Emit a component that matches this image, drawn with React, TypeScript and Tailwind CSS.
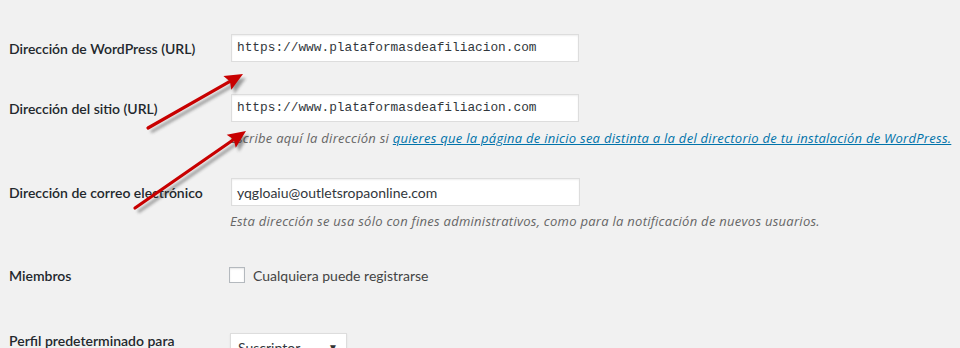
import React from "react";

const sans = { fontFamily: "Lato, 'Noto Sans', sans-serif" };
const ital = { fontFamily: "'Open Sans', 'Noto Sans', sans-serif" };

function Arrow({ x1, y1, x2, y2 }: { x1: number; y1: number; x2: number; y2: number }) {
  const dx = x2 - x1;
  const dy = y2 - y1;
  const len = Math.sqrt(dx * dx + dy * dy);
  const ux = dx / len;
  const uy = dy / len;
  const hl = 18;
  const hw = 8;
  const bx = x2 - ux * hl;
  const by = y2 - uy * hl;
  const px = -uy;
  const py = ux;
  const head = `${x2},${y2} ${bx + px * hw},${by + py * hw} ${bx + ux * 3},${by + uy * 3} ${bx - px * hw},${by - py * hw}`;
  return (
    <g>
      <g transform="translate(3,4)" opacity="0.45" filter="url(#blur)">
        <line x1={x1} y1={y1} x2={bx + ux * 4} y2={by + uy * 4} stroke="#333" strokeWidth="3" />
        <polygon points={head} fill="#333" />
      </g>
      <line x1={x1} y1={y1} x2={bx + ux * 4} y2={by + uy * 4} stroke="#c80000" strokeWidth="3.2" strokeLinecap="round" />
      <polygon points={head} fill="#c80000" />
    </g>
  );
}

export default function App() {
  return (
    <div className="relative w-[960px] h-[348px] overflow-hidden bg-[#f1f1f1] text-[#444]" style={sans}>
      <div className="pl-[9px]">
        <div className="h-0 relative">
          <p className="absolute left-[221px] top-[-17px] text-[13px] italic leading-[18px] tracking-[0.27px] text-[#666] whitespace-nowrap" style={ital}>
            En pocas palabras, explica de qué va este sitio.
          </p>
        </div>

        {/* Row 1 */}
        <div className="flex items-center pt-[34px]">
          <div className="w-[222px] text-[14px] font-semibold text-[#23282d] pt-[1px]">Dirección de WordPress (URL)</div>
          <div className="w-[348px] h-[28px] bg-white border border-[#ddd] shadow-[inset_0_1px_2px_rgba(0,0,0,0.07)] flex items-center px-[5px] text-[12.8px] text-[#32373c]" style={{ fontFamily: "'Liberation Mono', monospace" }}>
            https://www.plataformasdeafiliacion.com
          </div>
        </div>

        {/* Row 2 */}
        <div className="flex items-center mt-[32px]">
          <div className="w-[222px] text-[14px] font-semibold text-[#23282d] pt-[1px]">Dirección del sitio (URL)</div>
          <div className="w-[348px] h-[28px] bg-white border border-[#ddd] shadow-[inset_0_1px_2px_rgba(0,0,0,0.07)] flex items-center px-[5px] text-[12.8px] text-[#32373c]" style={{ fontFamily: "'Liberation Mono', monospace" }}>
            https://www.plataformasdeafiliacion.com
          </div>
        </div>
        <p className="ml-[221px] mt-[8px] text-[13px] italic leading-[17px] tracking-[0.27px] text-[#666] whitespace-nowrap" style={ital}>
          Escribe aquí la dirección si{" "}
          <span className="text-[#0073aa] underline">
            quieres que la página de inicio sea distinta a la del directorio de tu instalación de WordPress.
          </span>
        </p>

        {/* Row 3 */}
        <div className="flex items-center mt-[31px]">
          <div className="w-[222px] text-[14px] font-semibold text-[#23282d] pt-[1px]">Dirección de correo electrónico</div>
          <div className="w-[349px] h-[28px] bg-white border border-[#ddd] shadow-[inset_0_1px_2px_rgba(0,0,0,0.07)] flex items-center px-[5px] text-[14px] text-[#32373c]">
            yqgloaiu@outletsropaonline.com
          </div>
        </div>
        <p className="ml-[221px] mt-[6px] text-[13px] italic leading-[18px] tracking-[0.27px] text-[#666] whitespace-nowrap" style={ital}>
          Esta dirección se usa sólo con fines administrativos, como para la notificación de nuevos usuarios.
        </p>

        {/* Row 4 */}
        <div className="flex items-center mt-[37px] h-[16px]">
          <div className="w-[220px] text-[14px] font-semibold text-[#23282d]">Miembros</div>
          <div className="w-[16px] h-[16px] bg-white border border-[#b4b9be] shadow-[inset_0_1px_2px_rgba(0,0,0,0.1)]" />
          <span className="ml-[8px] text-[14px] text-[#444]">Cualquiera puede registrarse</span>
        </div>

        {/* Row 5 */}
        <div className="flex items-start mt-[50px]">
          <div className="w-[221px] text-[14px] font-semibold text-[#23282d] leading-[20px] -mt-[2px]">Perfil predeterminado para</div>
          <div className="w-[117px] h-[28px] bg-white border border-[#ddd] shadow-[0_1px_2px_rgba(0,0,0,0.07)] flex items-center justify-between pl-[7px] pr-[8px] text-[14px] text-[#32373c]">
            <span>Suscriptor</span>
            <span className="text-[10px] text-[#333]">▼</span>
          </div>
        </div>
      </div>

      <svg className="absolute inset-0 pointer-events-none" width="960" height="348">
        <defs>
          <filter id="blur" x="-20%" y="-20%" width="140%" height="140%">
            <feGaussianBlur stdDeviation="1.5" />
          </filter>
        </defs>
        <Arrow x1={148} y1={128} x2={243} y2={74} />
        <Arrow x1={135} y1={208} x2={246} y2={131} />
      </svg>
    </div>
  );
}
